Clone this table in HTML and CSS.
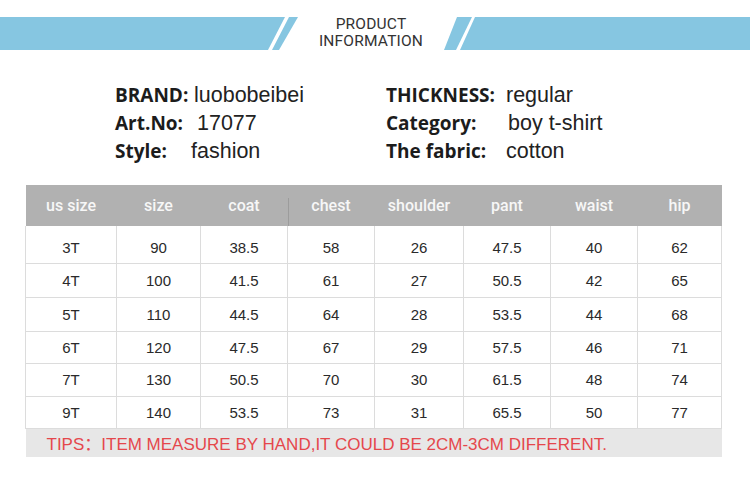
FILE: index.html
```html
<!DOCTYPE html>
<html>
<head>
<meta charset="utf-8">
<link rel="stylesheet" href="styles.css">
</head>
<body>
<div class="page">
  <header class="banner">
    <svg class="band band-left" width="298" height="33" viewBox="0 0 298 33">
      <polygon points="0,0 285,0 268,33 0,33" fill="#86c6e1"/>
      <polygon points="289,0 298,0 279,33 272,33" fill="#86c6e1"/>
    </svg>
    <div class="banner-title">PRODUCT<br>INFORMATION</div>
    <svg class="band band-right" width="306" height="33" viewBox="0 0 306 33">
      <polygon points="13,0 28,0 12,33 0,33" fill="#86c6e1"/>
      <polygon points="31,0 306,0 306,33 16,33" fill="#86c6e1"/>
    </svg>
  </header>

  <section class="info">
    <span class="label">BRAND:</span><span class="value">luobobeibei</span>
    <span class="label">THICKNESS:</span><span class="value">regular</span>
    <span class="label">Art.No:</span><span class="value v-art">17077</span>
    <span class="label">Category:</span><span class="value v-cat">boy t-shirt</span>
    <span class="label">Style:</span><span class="value v-style">fashion</span>
    <span class="label">The fabric:</span><span class="value">cotton</span>
  </section>

  <table class="sizes">
    <colgroup>
      <col style="width:91px"><col style="width:84px"><col style="width:87px"><col style="width:87px">
      <col style="width:89px"><col style="width:87px"><col style="width:87px"><col style="width:84px">
    </colgroup>
    <thead>
      <tr>
        <th>us size</th><th>size</th><th>coat</th><th class="mark">chest</th><th>shoulder</th><th>pant</th><th>waist</th><th>hip</th>
      </tr>
    </thead>
    <tbody>
      <tr class="r1"><td>3T</td><td>90</td><td>38.5</td><td>58</td><td>26</td><td>47.5</td><td>40</td><td>62</td></tr>
      <tr class="r2"><td>4T</td><td>100</td><td>41.5</td><td>61</td><td>27</td><td>50.5</td><td>42</td><td>65</td></tr>
      <tr class="r3"><td>5T</td><td>110</td><td>44.5</td><td>64</td><td>28</td><td>53.5</td><td>44</td><td>68</td></tr>
      <tr class="r4"><td>6T</td><td>120</td><td>47.5</td><td>67</td><td>29</td><td>57.5</td><td>46</td><td>71</td></tr>
      <tr class="r5"><td>7T</td><td>130</td><td>50.5</td><td>70</td><td>30</td><td>61.5</td><td>48</td><td>74</td></tr>
      <tr class="r6"><td>9T</td><td>140</td><td>53.5</td><td>73</td><td>31</td><td>65.5</td><td>50</td><td>77</td></tr>
      <tr class="tips"><td colspan="8">TIPS：ITEM MEASURE BY HAND,IT COULD BE 2CM-3CM DIFFERENT.</td></tr>
    </tbody>
  </table>
</div>
</body>
</html>
```

FILE: styles.css
```css
html, body {
  margin: 0;
  padding: 0;
  background: #ffffff;
}

.page {
  width: 750px;
  height: 478px;
  overflow: hidden;
  padding-top: 17px;
  box-sizing: border-box;
}

.banner {
  display: flex;
  align-items: center;
  height: 33px;
}

.band {
  display: block;
  flex: none;
}

.banner-title {
  width: 146px;
  flex: none;
  text-align: center;
  font-family: Roboto, "Liberation Sans", sans-serif;
  font-size: 15.5px;
  letter-spacing: 0.2px;
  line-height: 17px;
  color: #333333;
  margin-top: -1px;
}

.info {
  display: grid;
  grid-template-columns: 79px 192px 120px auto;
  grid-auto-rows: 28px;
  margin: 31px 0 0 115px;
  line-height: 28px;
}

.label {
  font-family: "Open Sans", "DejaVu Sans", sans-serif;
  font-weight: 700;
  font-size: 19px;
  color: #1c1c1c;
  white-space: nowrap;
}

.value {
  font-family: "Liberation Sans", Arial, sans-serif;
  font-size: 21.5px;
  color: #222222;
  white-space: nowrap;
}

.v-art {
  margin-left: 3px;
}

.v-cat {
  margin-left: 2px;
}

.v-style {
  margin-left: -3px;
}

.sizes {
  margin: 20px 0 0 25px;
  width: 696px;
  table-layout: fixed;
  border-collapse: collapse;
}

.sizes th {
  position: relative;
  height: 41px;
  box-sizing: border-box;
  padding: 0 0 1px;
  background: #b1b1b1;
  color: #f7f7f7;
  font-family: Roboto, "Liberation Sans", sans-serif;
  font-weight: 500;
  font-size: 16px;
  text-align: center;
  vertical-align: middle;
}

.sizes th.mark::before {
  content: "";
  position: absolute;
  left: 0;
  top: 13px;
  bottom: 0;
  width: 1px;
  background: #9c9c9c;
}

.sizes td {
  padding: 0;
  border: 1px solid #dcdcdc;
  font-family: "Liberation Sans", Arial, sans-serif;
  font-size: 15px;
  color: #2a2a2a;
  text-align: center;
  vertical-align: middle;
  box-sizing: border-box;
}

.sizes tr.r1 td {
  height: 37px;
  padding-top: 6px;
  border-top: none;
}

.sizes tr.r2 td { height: 34px; }
.sizes tr.r3 td { height: 34px; }
.sizes tr.r4 td { height: 32px; }
.sizes tr.r5 td { height: 33px; }
.sizes tr.r6 td { height: 32px; }

.sizes tr.tips td {
  height: 29px;
  background: #e7e7e7;
  border: none;
  text-align: left;
  padding-left: 21px;
  font-family: "Liberation Sans", Arial, "Noto Sans CJK SC", sans-serif;
  font-size: 17px;
  color: #e5474c;
}
```
